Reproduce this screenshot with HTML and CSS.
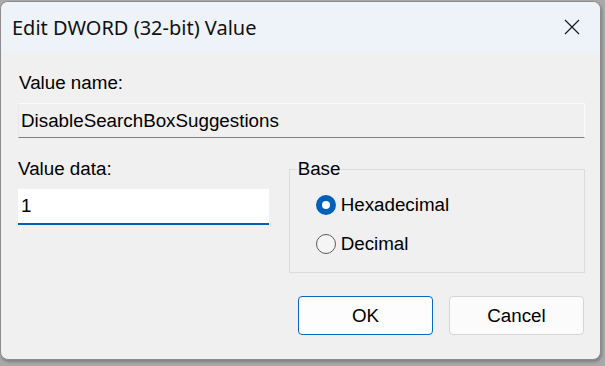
FILE: index.html
```html
<!DOCTYPE html>
<html>
<head>
<meta charset="utf-8">
<link rel="stylesheet" href="styles.css">
</head>
<body>
<div class="window">
  <div class="titlebar">
    <span class="title">Edit DWORD (32-bit) Value</span>
    <svg class="close" width="16" height="16" viewBox="0 0 16 16"><path d="M1 1 L15 15 M15 1 L1 15" stroke="#1a1a1a" stroke-width="1.2" fill="none"/></svg>
  </div>
  <div class="content">
    <div class="label first">Value name:</div>
    <div class="namefield">DisableSearchBoxSuggestions</div>
    <div class="lower">
      <div class="datacol">
        <div class="label">Value data:</div>
        <div class="datafield">1</div>
      </div>
      <fieldset class="group">
        <legend class="legend">Base</legend>
        <div class="radio"><span class="dot checked"></span><span>Hexadecimal</span></div>
        <div class="radio"><span class="dot"></span><span>Decimal</span></div>
      </fieldset>
    </div>
    <div class="buttons">
      <div class="btn primary">OK</div>
      <div class="btn">Cancel</div>
    </div>
  </div>
</div>
</body>
</html>
```

FILE: styles.css
```css
html, body {
  margin: 0;
  padding: 0;
}
body {
  width: 605px;
  height: 366px;
  background: #a9a9a9;
  overflow: hidden;
  font-family: "Liberation Sans", Arial, sans-serif;
  font-size: 18.8px;
  color: #000;
}
.window {
  margin-top: 1px;
  width: 599px;
  height: 357px;
  border: 1px solid #8c8c8c;
  border-radius: 8px;
  background: #f0f0f0;
  overflow: hidden;
  display: flex;
  flex-direction: column;
  box-shadow: 1px 2px 3px rgba(0,0,0,0.25);
}
.titlebar {
  height: 49px;
  flex: none;
  background: #eef3f9;
  display: flex;
  align-items: center;
  justify-content: space-between;
  padding: 0 20px 0 11px;
}
.title {
  font-family: "Noto Sans", "Open Sans", sans-serif;
  font-size: 20px;
  color: #111;
  margin-top: 1px;
}
.close {
  display: block;
  margin-top: 0;
}
.content {
  padding: 0 15px 0 17px;
  display: flex;
  flex-direction: column;
}
.label {
  line-height: 22px;
  height: 22px;
  padding-left: 1px;
}
.label.first {
  margin-top: 21px;
}
.namefield {
  margin-top: 9px;
  height: 33px;
  line-height: 33px;
  padding-left: 2px;
  background: #f0f0f0;
  border: 1px solid #fbfbfb;
  border-bottom: 1px solid #7f7f7f;
  border-left-color: #e8e8e8;
}
.lower {
  display: flex;
  margin-top: 20px;
}
.datacol {
  width: 252px;
  display: flex;
  flex-direction: column;
}
.datacol .label {
  padding-left: 0;
}
.datafield {
  margin-top: 9px;
  height: 34px;
  line-height: 34px;
  background: #fff;
  border-bottom: 2px solid #005fb8;
  padding-left: 3px;
}
.group {
  margin: 0 0 0 20px;
  padding: 0;
  width: 296px;
  height: 113px;
  border: 1px solid #dcdcdc;
  display: flex;
  flex-direction: column;
}
.legend {
  padding: 0 1px;
  margin-left: 7px;
  line-height: 22px;
}
.radio {
  display: flex;
  align-items: center;
  height: 22px;
  gap: 5px;
  margin-left: 26px;
}
.radio:first-of-type {
  margin-top: 14px;
}
.radio + .radio {
  margin-top: 17px;
}
.dot {
  width: 18px;
  height: 18px;
  border-radius: 50%;
  border: 1px solid #5c5c5c;
  background: #f5f5f5;
  flex: none;
  box-sizing: content-box;
}
.dot.checked {
  width: 8px;
  height: 8px;
  border: 6px solid #005fb8;
  background: #fff;
}
.buttons {
  display: flex;
  justify-content: flex-end;
  gap: 16px;
  margin-top: 23px;
  padding-right: 1px;
}
.btn {
  width: 133px;
  height: 37px;
  line-height: 37px;
  text-align: center;
  border: 1px solid #d5d5d5;
  border-radius: 4px;
  background: #fbfbfb;
}
.btn.primary {
  border-color: #0a67c2;
  background: #fdfdfd;
}
```
